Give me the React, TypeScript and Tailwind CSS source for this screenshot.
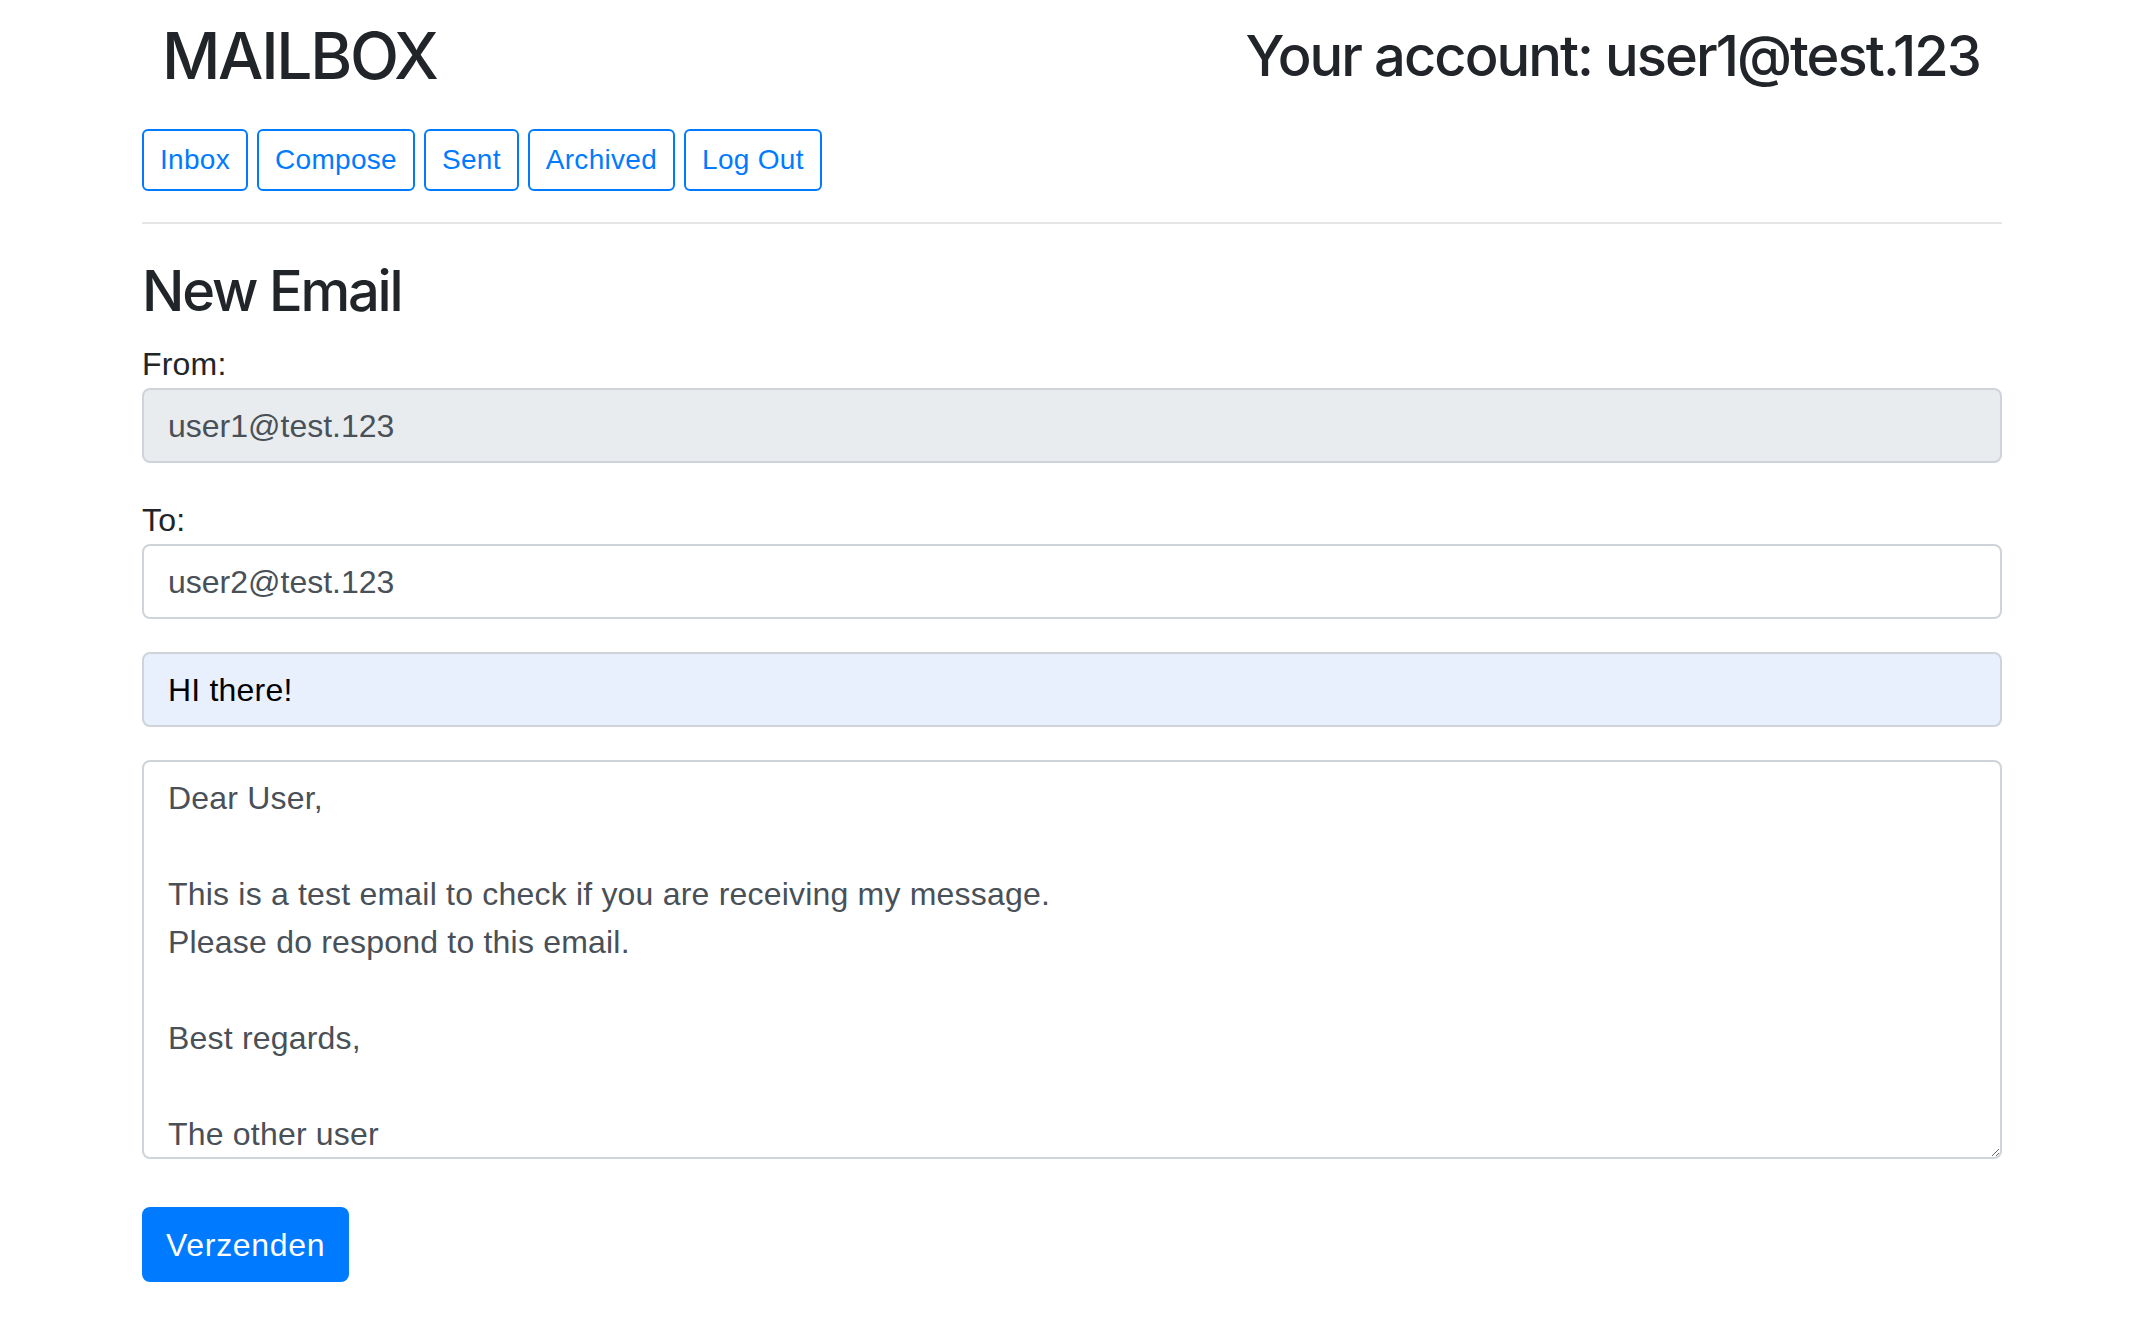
import React from "react";

const body = "font-['Liberation_Sans',Arial,sans-serif]";
const head = "font-['Inter','Liberation_Sans',sans-serif] font-medium";

const navItems = ["Inbox", "Compose", "Sent", "Archived", "Log Out"];

const message = `Dear User,

This is a test email to check if you are receiving my message.
Please do respond to this email.

Best regards,

The other user`;

export default function App() {
  return (
    <div className={`min-h-[1334px] w-full bg-white text-[#212529] ${body}`}>
      <div className="ml-[142px] w-[1860px]">
        {/* Header */}
        <div className="flex items-center justify-between pt-[18px] pl-[20px] pr-[22px]">
          <h2 className={`${head} text-[64px] leading-[76.8px] tracking-[-2.3px] text-[#212529]`}>
            MAILBOX
          </h2>
          <h3 className={`${head} text-[56px] leading-[67.2px] tracking-[-1.95px] text-[#212529]`}>
            Your account: user1@test.123
          </h3>
        </div>

        {/* Nav buttons */}
        <div className="mt-[34px] flex gap-[9px]">
          {navItems.map((item) => (
            <button
              key={item}
              className="h-[62px] rounded-[6px] border-2 border-[#007bff] bg-white px-[16px] text-[28px] leading-[42px] tracking-[0.3px] text-[#007bff]"
            >
              {item}
            </button>
          ))}
        </div>

        <div className="mt-[31px] h-[2px] w-full bg-[#e6e6e6]" />

        {/* Compose form */}
        <h3 className={`${head} mt-[34px] text-[56px] leading-[67.2px] tracking-[-2.2px] text-[#212529]`}>
          New Email
        </h3>

        <label className="mt-[15px] block text-[32px] leading-[48px] tracking-[0.2px] text-[#212529]">From:</label>
        <div className="flex h-[75px] items-center rounded-[8px] border-2 border-[#ced4da] bg-[#e9ecef] px-[24px] text-[32px] leading-[48px] text-[#495057]">
          user1@test.123
        </div>

        <label className="mt-[33px] block text-[32px] leading-[48px] tracking-[0.2px] text-[#212529]">To:</label>
        <div className="flex h-[75px] items-center rounded-[8px] border-2 border-[#ced4da] bg-white px-[24px] text-[32px] leading-[48px] text-[#495057]">
          user2@test.123
        </div>

        <div className="mt-[33px] flex h-[75px] items-center rounded-[8px] border-2 border-[#ced4da] bg-[#e8f0fe] px-[24px] text-[32px] leading-[48px] tracking-[0.2px] text-black">
          HI there!
        </div>

        <textarea
          readOnly
          value={message}
          className={`mt-[33px] block h-[399px] w-full resize-y overflow-hidden rounded-[8px] border-2 border-[#ced4da] bg-white px-[24px] pt-[12px] pb-[12px] text-[32px] leading-[48px] tracking-[0.2px] text-[#495057] outline-none ${body}`}
        />

        <button className="mt-[48px] h-[75px] rounded-[8px] bg-[#007bff] px-[24px] text-[32px] leading-[48px] tracking-[0.7px] text-white">
          Verzenden
        </button>
      </div>
    </div>
  );
}
